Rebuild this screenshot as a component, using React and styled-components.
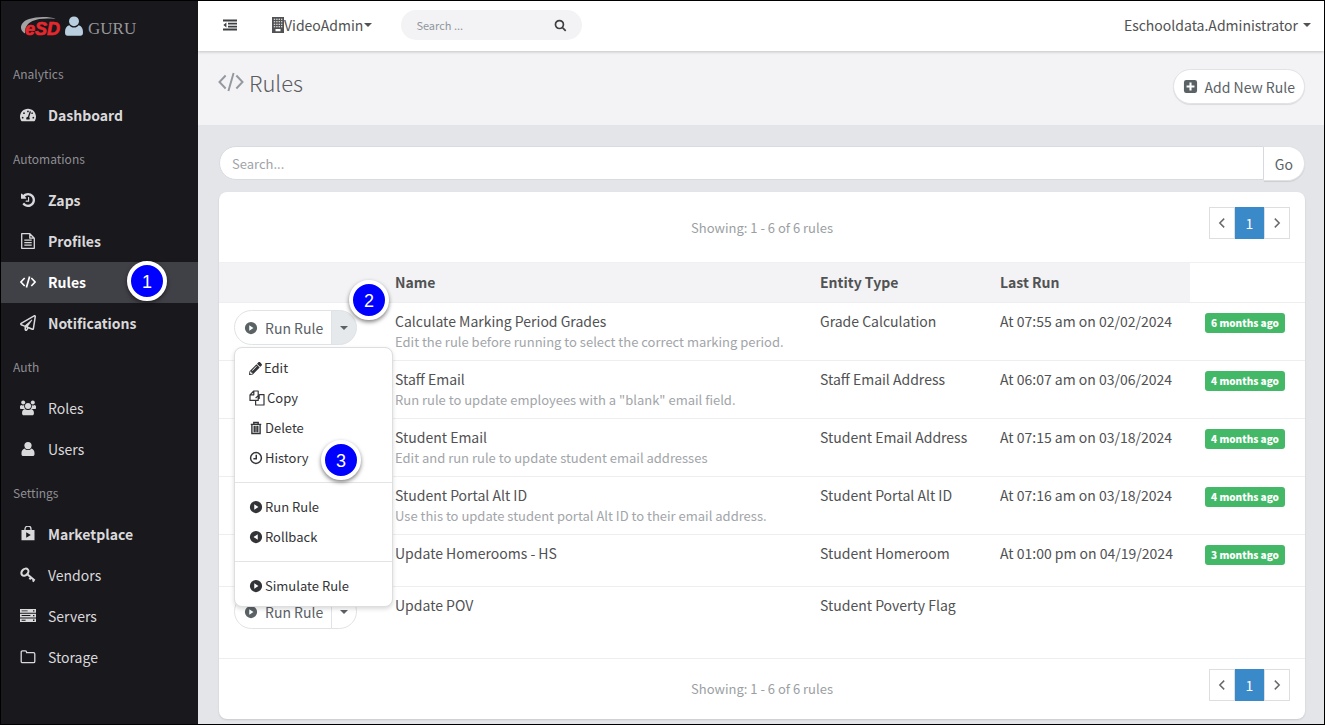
import React from 'react';
import styled, { createGlobalStyle, css } from 'styled-components';
import { FaPencilAlt, FaRegPaperPlane, FaTachometerAlt } from 'react-icons/fa';

const sections = [
  {
    title: 'Analytics',
    items: [{ label: 'Dashboard', icon: 'gauge', bold: true }],
  },
  {
    title: 'Automations',
    items: [
      { label: 'Zaps', icon: 'history', bold: true },
      { label: 'Profiles', icon: 'file', bold: true },
      { label: 'Rules', icon: 'code', bold: true, active: true, step: 1 },
      { label: 'Notifications', icon: 'plane', bold: true },
    ],
  },
  {
    title: 'Auth',
    items: [
      { label: 'Roles', icon: 'group' },
      { label: 'Users', icon: 'user' },
    ],
  },
  {
    title: 'Settings',
    items: [
      { label: 'Marketplace', icon: 'bag', bold: true },
      { label: 'Vendors', icon: 'key' },
      { label: 'Servers', icon: 'server' },
      { label: 'Storage', icon: 'folder' },
    ],
  },
];

const rules = [
  {
    name: 'Calculate Marking Period Grades',
    note: 'Edit the rule before running to select the correct marking period.',
    entity: 'Grade Calculation',
    lastRun: 'At 07:55 am on 02/02/2024',
    age: '6 months ago',
    open: true,
  },
  {
    name: 'Staff Email',
    note: 'Run rule to update employees with a "blank" email field.',
    entity: 'Staff Email Address',
    lastRun: 'At 06:07 am on 03/06/2024',
    age: '4 months ago',
  },
  {
    name: 'Student Email',
    note: 'Edit and run rule to update student email addresses',
    entity: 'Student Email Address',
    lastRun: 'At 07:15 am on 03/18/2024',
    age: '4 months ago',
  },
  {
    name: 'Student Portal Alt ID',
    note: 'Use this to update student portal Alt ID to their email address.',
    entity: 'Student Portal Alt ID',
    lastRun: 'At 07:16 am on 03/18/2024',
    age: '4 months ago',
  },
  {
    name: 'Update Homerooms - HS',
    entity: 'Student Homeroom',
    lastRun: 'At 01:00 pm on 04/19/2024',
    age: '3 months ago',
  },
  { name: 'Update POV', entity: 'Student Poverty Flag' },
];

const Svg = ({ size = 16, children, ...rest }) => (
  <svg width={size} height={size} viewBox="0 0 16 16" fill="currentColor" aria-hidden="true" {...rest}>
    {children}
  </svg>
);

const UserIcon = ({ size }) => (
  <Svg size={size}>
    <circle cx="8" cy="4.6" r="3.6" />
    <path d="M4.6 7.4C2.6 8 1.5 9.6 1.5 12v1.2c0 1 .7 1.8 1.8 1.8h9.4c1.1 0 1.8-.8 1.8-1.8V12c0-2.4-1.1-4-3.1-4.6-.8 1.1-2 1.700-3.400 1.700S5.400 8.500 4.600 7.400z" />
  </Svg>
);

const GroupIcon = () => (
  <Svg>
    <circle cx="3.2" cy="2.6" r="2" />
    <circle cx="12.8" cy="2.6" r="2" />
    <path d="M0 8.800V6.600C0 5.600.700 5 1.600 4.900c1 .7 2 .7 2.600.2A4.400 4.400 0 0 0 5.200 9H1.200C.5 9 0 8.800 0 8.800zM16 8.800V6.600c0-1-.7-1.600-1.600-1.700-1 .7-2 .7-2.600.2A4.400 4.400 0 0 1 10.800 9h4c.7 0 1.200-.2 1.200-.2z" />
    <circle cx="8" cy="6" r="3" />
    <path d="M5 8.900c-1.800.3-2.900 1.800-2.900 3.700v1.200c0 .9.700 1.500 1.600 1.500h8.600c.9 0 1.600-.6 1.600-1.500v-1.200c0-1.900-1.100-3.400-2.900-3.700-.8.800-1.800 1.100-3 1.100s-2.200-.3-3-1.100z" />
  </Svg>
);

const HistoryIcon = () => (
  <svg width="14" height="14" viewBox="0 128 1536 1536" fill="currentColor" aria-hidden="true">
    <path d="M1536 896q0 156-61 298t-164 245-245 164-298 61q-172 0-327-72.5t-264-204.5q-7-10-6.5-22.5t8.5-20.5l137-138q10-9 25-9 16 2 23 12 73 95 179 147t225 52q104 0 198.5-40.5t163.5-109.5 109.5-163.5 40.5-198.5-40.5-198.5-109.5-163.5-163.5-109.5-198.5-40.5q-98 0-188 35.5t-160 101.5l137 138q31 30 14 69-17 40-59 40h-448q-26 0-45-19t-19-45v-448q0-42 40-59 39-17 69 14l130 129q107-101 244.500-156.500t284.500-55.500q156 0 298 61t245 164 164 245 61 298zm-640-288v448q0 14-9 23t-23 9h-320q-14 0-23-9t-9-23v-64q0-14 9-23t23-9h224v-352q0-14 9-23t23-9h64q14 0 23 9t9 23z" />
  </svg>
);

const CodeIcon = ({ size, weight = 1.7 }) => (
  <Svg size={size}>
    <path
      d="M4.700 4L.900 8l3.800 4M11.300 4l3.800 4-3.800 4M9.600 2.400L6.400 13.600"
      fill="none"
      stroke="currentColor"
      strokeWidth={weight}
    />
  </Svg>
);

const FileIcon = () => (
  <Svg>
    <path
      d="M1.700.7h8.100l4.500 4.500v10.100H1.700zM9.800.7v4.500h4.500"
      fill="none"
      stroke="currentColor"
      strokeWidth="1.300"
      strokeLinejoin="round"
    />
    <path d="M4.300 6.500h7.400v1.300H4.300zM4.300 9h7.400v1.300H4.300zM4.300 11.500h7.400v1.300H4.300z" />
  </Svg>
);

const BagIcon = () => (
  <Svg>
    <path d="M5 4.500V3a3 3 0 0 1 6 0v1.500" fill="none" stroke="currentColor" strokeWidth="1.300" />
    <path fillRule="evenodd" d="M1.500 4h13v10.300h-13zM6.200 6.300v5.400l4.600-2.700z" />
  </Svg>
);

const KeyIcon = () => (
  <Svg>
    <ellipse cx="4.900" cy="5.200" rx="4" ry="3" transform="rotate(-45 4.900 5.200)" fill="none" stroke="currentColor" strokeWidth="2.100" />
    <path d="M7.300 7.300l7.400 6.200M11 10.400l-1.500 2M14 13l-1.200 1.700" fill="none" stroke="currentColor" strokeWidth="2.100" />
  </Svg>
);

const ServerIcon = () => (
  <Svg>
    <path
      fillRule="evenodd"
      d="M0 1h16v3.700H0zM1.600 2.400v.9h6v-.9zM13 2.200v1.300h1.400V2.200zM0 5.700h16v3.700H0zM1.600 7.100V8h8.800v-.9zM13 6.900v1.300h1.400V6.900zM0 10.400h16v3.700H0zM1.600 11.800v.9h4v-.9zM13 11.600v1.300h1.400v-1.300z"
    />
  </Svg>
);

const FolderIcon = () => (
  <Svg>
    <path
      d="M1.200 3.200c0-.8.500-1.300 1.300-1.300h2.800c.8 0 1.300.5 1.300 1.300v.5h6.900c.8 0 1.300.5 1.300 1.300v7.400c0 .8-.5 1.300-1.300 1.300h-11c-.8 0-1.300-.5-1.300-1.300z"
      fill="none"
      stroke="currentColor"
      strokeWidth="1.300"
    />
  </Svg>
);

const CirclePlay = ({ back }) => (
  <Svg size={14}>
    <path
      fillRule="evenodd"
      d={
        back
          ? 'M8 1a7 7 0 1 0 0 14A7 7 0 0 0 8 1zM10 4.800v6.400L5.200 8z'
          : 'M8 1a7 7 0 1 0 0 14A7 7 0 0 0 8 1zM6 4.800v6.400L10.800 8z'
      }
    />
  </Svg>
);

const CopyIcon = () => (
  <Svg>
    <path
      d="M4.800 1h4.400v9.400H1V4.800zM4.800 1v3.800H1M10.200 4.600H15V15H6.600v-4.600M10.200 4.600L6.600 8.200M10.200 4.600v3.800H9.200"
      fill="none"
      stroke="currentColor"
      strokeWidth="1.200"
      strokeLinejoin="round"
    />
  </Svg>
);

const TrashIcon = () => (
  <Svg size={14}>
    <path
      d="M2 3.800h12M5.500 3.500V1.700h5v1.800M3.300 4v10.300h9.400V4M6 5.500v7.300M8 5.500v7.300M10 5.500v7.300"
      fill="none"
      stroke="currentColor"
      strokeWidth="1.600"
    />
  </Svg>
);

const ClockIcon = () => (
  <Svg size={14}>
    <path
      d="M8 1.800a6.200 6.200 0 1 0 0 12.400A6.200 6.200 0 0 0 8 1.800zM8.300 4.200v4.600H5"
      fill="none"
      stroke="currentColor"
      strokeWidth="1.700"
    />
  </Svg>
);

const PlusSquare = () => (
  <Svg size={15}>
    <path
      fillRule="evenodd"
      d="M3.500 1h9A2.500 2.500 0 0 1 15 3.500v9a2.500 2.500 0 0 1-2.500 2.500h-9A2.500 2.500 0 0 1 1 12.500v-9A2.500 2.500 0 0 1 3.500 1zM6.900 3.800v3.100H3.800v2.200h3.100v3.100h2.200V9.100h3.100V6.900H9.100V3.800z"
    />
  </Svg>
);

const OutdentIcon = () => (
  <Svg>
    <path d="M1 2.500h14v1.900H1zM6 5.700h9v1.700H6zM6 8.700h9v1.700H6zM1 11.600h14v1.900H1zM4.400 5.600v4.800L1.400 8z" />
  </Svg>
);

const BuildingIcon = () => (
  <svg width="12" height="16" viewBox="2 0 12 16" fill="currentColor" aria-hidden="true">
    <path
      fillRule="evenodd"
      d="M2 0h12v16H2zM3.800 1.800v1h1.400v-1zM6.200 1.800v1h1.400v-1zM8.600 1.800v1H10v-1zM11 1.800v1h1.300v-1zM3.800 4.300v1h1.400v-1zM6.200 4.300v1h1.400v-1zM8.600 4.300v1H10v-1zM11 4.300v1h1.300v-1zM3.800 6.800v1h1.400v-1zM6.200 6.800v1h1.400v-1zM8.600 6.800v1H10v-1zM11 6.800v1h1.300v-1zM3.800 9.300v1h1.400v-1zM6.200 9.300v1h1.400v-1zM8.600 9.300v1H10v-1zM11 9.300v1h1.300v-1zM5.500 12v2.300h5V12z"
    />
  </svg>
);

const SearchIcon = () => (
  <Svg size={13}>
    <path d="M6.700 1.900a4.900 4.900 0 1 0 0 9.800 4.900 4.900 0 0 0 0-9.800zM10.200 10.300l4.200 4.200" fill="none" stroke="currentColor" strokeWidth="2.100" />
  </Svg>
);

const Chevron = ({ right }) => (
  <Svg size={14}>
    <path d={right ? 'M5.500 3l5 5-5 5' : 'M10.500 3l-5 5 5 5'} fill="none" stroke="currentColor" strokeWidth="1.700" />
  </Svg>
);

const navIcons = {
  gauge: <FaTachometerAlt />,
  history: <HistoryIcon />,
  file: <FileIcon />,
  code: <CodeIcon />,
  plane: <FaRegPaperPlane />,
  group: <GroupIcon />,
  user: <UserIcon />,
  bag: <BagIcon />,
  key: <KeyIcon />,
  server: <ServerIcon />,
  folder: <FolderIcon />,
};

const Logo = () => (
  <Brand href="#">
    <svg width="42" height="24" viewBox="0 0 42 24" aria-hidden="true">
      <path d="M5 19.500C-1.500 16 0 8 9 5 17 2.300 29 2.300 36 4.800 27 4 18 4.200 12.500 7 7.500 9.500 5 13 5 19.500z" fill="#a3a3a6" />
      <text
        x="5"
        y="21"
        fill="#e5282e"
        stroke="#e5282e"
        strokeWidth="0.700"
        fontFamily="Liberation Sans, sans-serif"
        fontWeight="700"
        fontStyle="italic"
        fontSize="18"
      >
        eSD
      </text>
    </svg>
    <BrandUser>
      <UserIcon size={22} />
    </BrandUser>
    <BrandName>GURU</BrandName>
  </Brand>
);

const Pagination = ({ label }) => (
  <Pager aria-label={label}>
    <PageButton aria-label="Previous page">
      <Chevron />
    </PageButton>
    <PageButton $current aria-current="page">
      1
    </PageButton>
    <PageButton aria-label="Next page">
      <Chevron right />
    </PageButton>
  </Pager>
);

const RuleMenu = () => (
  <Menu>
    <MenuItem><FaPencilAlt size={13} />Edit</MenuItem>
    <MenuItem><CopyIcon />Copy</MenuItem>
    <MenuItem><TrashIcon />Delete</MenuItem>
    <MenuItem>
      <ClockIcon />
      History
      <Step $place="menu">3</Step>
    </MenuItem>
    <Divider />
    <MenuItem><CirclePlay />Run Rule</MenuItem>
    <MenuItem><CirclePlay back />Rollback</MenuItem>
    <Divider />
    <MenuItem><CirclePlay />Simulate Rule</MenuItem>
  </Menu>
);

const App = () => {
  return (
    <Page>
      <GlobalStyle />
      <Sidebar>
        <Logo />
        {sections.map((section) => (
          <nav key={section.title} aria-label={section.title}>
            <SectionTitle>{section.title}</SectionTitle>
            {section.items.map((item) => (
              <NavItem key={item.label} href="#" $active={item.active} $bold={item.bold}>
                <NavIcon>{navIcons[item.icon]}</NavIcon>
                {item.label}
                {item.step && <Step $place="nav">{item.step}</Step>}
              </NavItem>
            ))}
          </nav>
        ))}
      </Sidebar>
      <Main>
        <TopBar>
          <IconButton aria-label="Toggle sidebar">
            <OutdentIcon />
          </IconButton>
          <TopButton>
            <BuildingIcon />
            VideoAdmin
            <Caret />
          </TopButton>
          <TopSearch>
            <TopInput aria-label="Search site" placeholder="Search ..." />
            <IconButton aria-label="Search">
              <SearchIcon />
            </IconButton>
          </TopSearch>
          <AccountButton>
            Eschooldata.Administrator
            <Caret />
          </AccountButton>
        </TopBar>
        <Heading>
          <Title>
            <CodeIcon size={26} weight={1.2} />
            Rules
          </Title>
          <AddButton>
            <PlusSquare />
            Add New Rule
          </AddButton>
        </Heading>
        <Content>
          <SearchRow>
            <SearchInput aria-label="Search rules" placeholder="Search..." />
            <GoButton>Go</GoButton>
          </SearchRow>
          <Card>
            <CardBar>
              <Summary>Showing: 1 - 6 of 6 rules</Summary>
              <Pagination label="Pages, top" />
            </CardBar>
            <Table>
              <colgroup>
                <Col $width={161} />
                <col />
                <Col $width={180} />
                <Col $width={205} />
                <Col $width={115} />
              </colgroup>
              <thead>
                <tr>
                  <Th />
                  <Th>Name</Th>
                  <Th>Entity Type</Th>
                  <Th>Last Run</Th>
                  <Th as="td" $plain />
                </tr>
              </thead>
              <tbody>
                {rules.map((rule) => (
                  <Row key={rule.name} $tall={Boolean(rule.note)}>
                    <Td>
                      <Actions>
                        <RunButton>
                          <CirclePlay />
                          Run Rule
                        </RunButton>
                        <ToggleButton $open={rule.open} aria-label={`More actions for ${rule.name}`}>
                          <Caret />
                        </ToggleButton>
                        {rule.open && <RuleMenu />}
                        {rule.open && <Step $place="toggle">2</Step>}
                      </Actions>
                    </Td>
                    <Td>
                      {rule.name}
                      {rule.note && <Note>{rule.note}</Note>}
                    </Td>
                    <Td>{rule.entity}</Td>
                    <Td>{rule.lastRun}</Td>
                    <Td>{rule.age && <Badge>{rule.age}</Badge>}</Td>
                  </Row>
                ))}
              </tbody>
            </Table>
            <CardBar $bottom>
              <Summary>Showing: 1 - 6 of 6 rules</Summary>
              <Pagination label="Pages, bottom" />
            </CardBar>
          </Card>
        </Content>
      </Main>
    </Page>
  );
};

const GlobalStyle = createGlobalStyle`
  * {
    box-sizing: border-box;
  }

  body {
    margin: 0;
    color: #515253;
    font-family: 'Noto Sans CJK SC', 'Noto Sans', sans-serif;
    font-size: 14px;
    line-height: 22px;
  }

  button,
  input {
    margin: 0;
    padding: 0;
    border: 0;
    background: none;
    color: inherit;
    font: inherit;
  }

  button {
    cursor: pointer;
  }

  svg {
    display: block;
    flex: none;
  }
`;

const Page = styled.div`
  display: flex;
  min-height: 100vh;
  border: 1px solid #000;
  background: #e4e5e9;
`;

const Sidebar = styled.aside`
  flex: none;
  width: 197px;
  background: #19181d;
  color: #d9d9db;
`;

const Brand = styled.a`
  display: flex;
  align-items: center;
  height: 50px;
  padding-left: 19px;
  text-decoration: none;
`;

const BrandUser = styled.span`
  margin-left: 1px;
  color: #b9cfdf;
`;

const BrandName = styled.span`
  margin: 5px 0 0 3px;
  color: #98989b;
  font-family: 'Liberation Serif', serif;
  font-size: 17px;
`;

const SectionTitle = styled.div`
  height: 44px;
  padding: 12px 12px 0;
  color: #8f8f94;
  font-size: 12px;
`;

const NavItem = styled.a`
  display: flex;
  align-items: center;
  position: relative;
  height: 41px;
  padding: 0 0 1px 19px;
  background: ${(props) => (props.$active ? '#404047' : 'transparent')};
  color: ${(props) => (props.$active ? '#fff' : '#d9d9db')};
  font-weight: ${(props) => (props.$bold ? 700 : 400)};
  text-decoration: none;

  &:hover {
    background: #404047;
  }
`;

const NavIcon = styled.span`
  display: flex;
  justify-content: center;
  width: 16px;
  margin-right: 12px;
  font-size: 16px;
`;

const stepPlaces = {
  nav: css`
    top: -1px;
    left: 126px;
  `,
  toggle: css`
    top: -30px;
    left: 115px;
  `,
  menu: css`
    top: -3px;
    left: 86px;
  `,
};

const Step = styled.span`
  position: absolute;
  z-index: 3;
  width: 40px;
  height: 40px;
  border: 4px solid #fff;
  border-radius: 50%;
  background: #0000fe;
  box-shadow: 0 2px 4px rgba(0, 0, 0, 0.5);
  color: #fff;
  font-family: 'Liberation Sans', sans-serif;
  font-size: 18px;
  font-weight: 400;
  line-height: 34px;
  text-align: center;
  ${(props) => stepPlaces[props.$place]}
`;

const Main = styled.main`
  flex: 1;
  min-width: 0;
`;

const TopBar = styled.header`
  display: flex;
  align-items: center;
  position: relative;
  height: 50px;
  padding: 0 13px 2px 24px;
  background: #fff;
  box-shadow: 0 1px 3px rgba(0, 0, 0, 0.2);
`;

const IconButton = styled.button`
  color: #3d3f42;
`;

const Caret = styled.span`
  display: inline-block;
  border: 4px solid transparent;
  border-top-color: currentColor;
  border-bottom: 0;
`;

const TopButton = styled.button`
  display: flex;
  align-items: center;
  margin-left: 34px;

  ${Caret} {
    margin-left: 1px;
  }
`;

const TopSearch = styled.div`
  display: flex;
  align-items: center;
  width: 181px;
  height: 30px;
  margin-left: 29px;
  padding: 0 15px;
  border-radius: 15px;
  background: #f3f3f5;
`;

const TopInput = styled.input`
  flex: 1;
  min-width: 0;
  font-size: 11px;
  outline: none;

  &::placeholder {
    color: #8f979c;
    opacity: 1;
  }
`;

const AccountButton = styled.button`
  display: flex;
  align-items: center;
  gap: 5px;
  margin-left: auto;
`;

const Heading = styled.section`
  display: flex;
  align-items: flex-start;
  justify-content: space-between;
  height: 74px;
  padding: 18px 19px 0 20px;
  background: #f3f3f5;
`;

const Title = styled.h1`
  display: flex;
  align-items: center;
  gap: 5px;
  margin: 0;
  color: #5c5c5f;
  font-size: 22px;
  font-weight: 300;
  line-height: 26px;

  svg {
    color: #93999e;
  }
`;

const pill = css`
  display: flex;
  align-items: center;
  height: 35px;
  border: 1px solid #e0e3e5;
  background: #fff;
  color: #5a6266;
`;

const AddButton = styled.button`
  ${pill}
  gap: 7px;
  padding: 0 9px;
  border-radius: 18px;
  box-shadow: 0 1px 1px rgba(0, 0, 0, 0.1);
`;

const Content = styled.div`
  padding: 21px 19px 4px 21px;
`;

const SearchRow = styled.div`
  display: flex;
  align-items: flex-start;
`;

const SearchInput = styled.input`
  flex: 1;
  height: 34px;
  padding: 0 12px;
  border: 1px solid #d8dce0;
  border-radius: 17px 0 0 17px;
  background: #fff;
  font-size: 13px;
  outline: none;

  &::placeholder {
    color: #a0a4a8;
    opacity: 1;
  }
`;

const GoButton = styled.button`
  ${pill}
  padding: 0 11px;
  border-left: 0;
  border-radius: 0 18px 18px 0;
  box-shadow: 0 1px 1px rgba(0, 0, 0, 0.1);
`;

const Card = styled.section`
  margin-top: 11px;
  border-radius: 8px;
  background: #fff;
  box-shadow: 0 1px 2px rgba(0, 0, 0, 0.12);
`;

const CardBar = styled.div`
  display: grid;
  grid-template-columns: 1fr auto 1fr;
  align-items: center;
  height: ${(props) => (props.$bottom ? '61px' : '70px')};
  margin-top: ${(props) => (props.$bottom ? '19px' : '0')};
  padding: 0 15px 8px;
  border-top: ${(props) => (props.$bottom ? '1px solid #eceeef' : '0')};
`;

const Summary = styled.span`
  grid-column: 2;
  padding-top: 9px;
  color: #9b9fa3;
  font-size: 13px;
`;

const Pager = styled.nav`
  display: flex;
  justify-self: end;
`;

const PageButton = styled.button`
  display: flex;
  align-items: center;
  justify-content: center;
  width: ${(props) => (props.$current ? '29px' : '26px')};
  height: 32px;
  border: 1px solid ${(props) => (props.$current ? '#3a89c9' : '#dcdee0')};
  background: ${(props) => (props.$current ? '#3a89c9' : '#fff')};
  color: ${(props) => (props.$current ? '#fff' : '#67696c')};
`;

const Table = styled.table`
  width: 100%;
  border-collapse: collapse;
  table-layout: fixed;
`;

const Col = styled.col`
  width: ${(props) => props.$width}px;
`;

const Th = styled.th`
  height: 40px;
  padding: 0 15px 2px;
  border-top: 1px solid #eff0f2;
  background: ${(props) => (props.$plain ? '#fff' : '#f3f3f5')};
  font-weight: 700;
  text-align: left;
`;

const Row = styled.tr`
  height: ${(props) => (props.$tall ? '58px' : '52px')};
`;

const Td = styled.td`
  padding: 7px 15px 0;
  border-top: 1px solid #eceeef;
  vertical-align: top;
`;

const Note = styled.div`
  margin-top: -1px;
  color: #a2a5a9;
  font-size: 13px;
`;

const Actions = styled.div`
  display: flex;
  position: relative;
  width: 123px;
`;

const RunButton = styled.button`
  ${pill}
  flex: 1;
  gap: 7px;
  padding-left: 9px;
  border-radius: 18px 0 0 18px;
`;

const ToggleButton = styled.button`
  ${pill}
  justify-content: center;
  width: 26px;
  margin-left: -1px;
  border-radius: 0 18px 18px 0;
  background: ${(props) => (props.$open ? '#e6e9eb' : '#fff')};
`;

const Menu = styled.div`
  position: absolute;
  top: 37px;
  left: 0;
  z-index: 2;
  width: 159px;
  padding: 5px 0;
  border: 1px solid #dcdee0;
  border-radius: 8px;
  background: #fff;
  box-shadow: 0 2px 4px rgba(0, 0, 0, 0.15);
`;

const MenuItem = styled.button`
  display: flex;
  align-items: center;
  gap: 2px;
  position: relative;
  width: 100%;
  height: 30px;
  padding: 0 14px;
  color: #333437;
  font-size: 13px;
`;

const Divider = styled.hr`
  margin: 9px 0;
  border: 0;
  border-top: 1px solid #e3e4e6;
`;

const Badge = styled.span`
  display: block;
  width: 80px;
  height: 20px;
  margin-top: 3px;
  border-radius: 3px;
  background: #43b968;
  color: #fff;
  font-size: 10px;
  font-weight: 900;
  line-height: 19px;
  text-align: center;
`;

export default App;
